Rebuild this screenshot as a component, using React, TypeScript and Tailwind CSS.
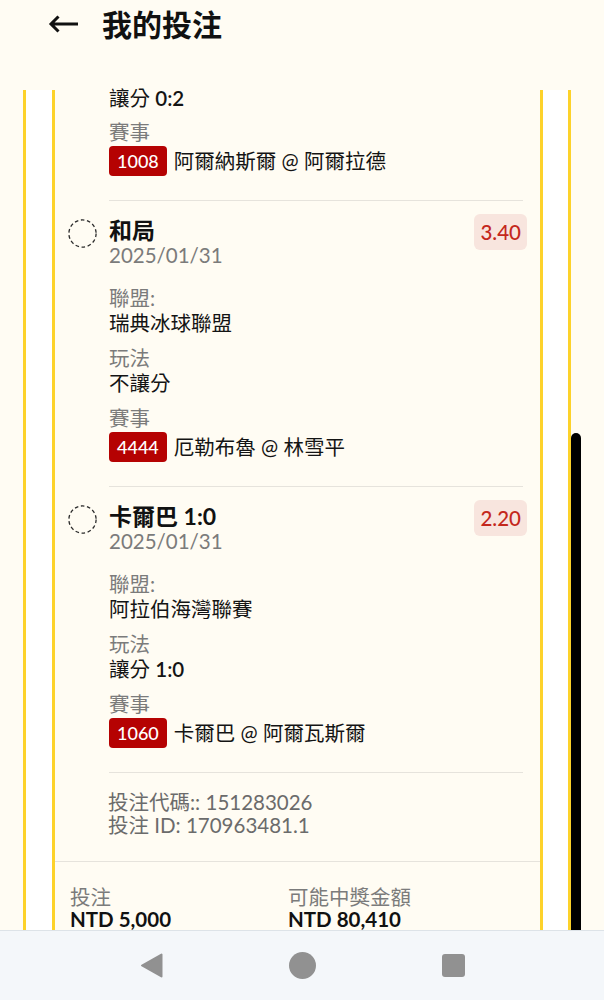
import React from "react";

const FONT = "font-['Lato','Noto_Sans_CJK_TC',sans-serif]";

function DashedCircle() {
  return (
    <svg width="29" height="29" viewBox="0 0 29 29" className="mt-[3px] shrink-0">
      <circle cx="14.5" cy="14.5" r="13.6" fill="none" stroke="#2a2a2a" strokeWidth="1.3" strokeDasharray="3.6 2.6" />
    </svg>
  );
}

function Label({ children }: { children: React.ReactNode }) {
  return <div className="text-[20.5px] leading-[25px] text-[#7b7b7b]">{children}</div>;
}

function Value({ children }: { children: React.ReactNode }) {
  return <div className="text-[20.5px] leading-[25px] text-[#141414]">{children}</div>;
}

function MatchRow({ code, teams }: { code: string; teams: string }) {
  return (
    <div className="mt-[1px] flex items-center gap-[7px]">
      <span className="flex h-[30px] items-center rounded-[4px] bg-[#b50202] px-[8px] text-[18px] font-medium text-white">{code}</span>
      <span className="text-[20.5px] leading-[30px] text-[#141414]">{teams}</span>
    </div>
  );
}

function Divider() {
  return <div className="ml-[54px] mr-[17px] h-px bg-[#e6e3dc]" />;
}

function Item({
  title,
  odds,
  league,
  play,
  code,
  teams,
}: {
  title: React.ReactNode;
  odds: string;
  league: string;
  play: React.ReactNode;
  code: string;
  teams: string;
}) {
  return (
    <div className="flex px-[13px] pb-[24px] pt-[15px]">
      <DashedCircle />
      <div className="ml-[12px] flex-1">
        <div className="flex items-start justify-between">
          <div>
            <div className="text-[23px] font-bold leading-[28px] text-[#111]">{title}</div>
            <div className="text-[20.5px] leading-[22px] text-[#7b7b7b]">2025/01/31</div>
          </div>
          <div className="-mt-[2px] flex h-[36px] items-center rounded-[6px] bg-[#f8e5de] px-[6px] text-[20.5px] font-medium text-[#c4281c]">
            {odds}
          </div>
        </div>
        <div className="mt-[20px] flex flex-col gap-[10px]">
          <div>
            <Label>聯盟:</Label>
            <Value>{league}</Value>
          </div>
          <div>
            <Label>玩法</Label>
            <Value>{play}</Value>
          </div>
          <div>
            <Label>賽事</Label>
            <MatchRow code={code} teams={teams} />
          </div>
        </div>
      </div>
    </div>
  );
}

export default function App() {
  return (
    <div className={`relative h-[1000px] w-[604px] overflow-hidden bg-[#fffcf3] ${FONT}`}>
      <header className="h-[90px]">
        <div className="flex h-[48px] items-center pl-[48px]">
          <svg width="31" height="18" viewBox="0 0 31 18" className="shrink-0">
            <path d="M30 9H3M10.5 1.5L3 9l7.5 7.5" fill="none" stroke="#111" strokeWidth="3" strokeLinecap="butt" strokeLinejoin="miter" />
          </svg>
          <h1 className="ml-[23px] text-[30px] font-bold leading-[40px] text-[#111]">我的投注</h1>
        </div>
      </header>

      <div className="h-[840px]">
        <div className="ml-[23px] w-[548px] border-x-[3px] border-[#fdd22a] bg-white pl-[26px] pr-[25px]">
          <div className="border-x-[3px] border-[#fdd22a] bg-[#fffcf3]">
            <div className="pb-[24px] pl-[54px]">
              <div className="text-[20.5px] leading-[16px] text-[#141414]">
                讓分 <span className="font-semibold">0:2</span>
              </div>
              <div className="mt-[14px]">
                <Label>賽事</Label>
                <MatchRow code="1008" teams="阿爾納斯爾 @ 阿爾拉德" />
              </div>
            </div>
            <Divider />
            <Item
              title="和局"
              odds="3.40"
              league="瑞典冰球聯盟"
              play="不讓分"
              code="4444"
              teams="厄勒布魯 @ 林雪平"
            />
            <Divider />
            <Item
              title="卡爾巴 1:0"
              odds="2.20"
              league="阿拉伯海灣聯賽"
              play={
                <>
                  讓分 <span className="font-semibold">1:0</span>
                </>
              }
              code="1060"
              teams="卡爾巴 @ 阿爾瓦斯爾"
            />
            <Divider />
            <div className="pb-[24px] pl-[53px] pt-[18px] text-[20.5px] leading-[23px] text-[#6b6b6b]">
              <div>投注代碼:: 151283026</div>
              <div>投注 ID: 170963481.1</div>
            </div>
            <div className="h-px bg-[#e6e3dc]" />
            <div className="flex pl-[15px] pt-[23px]">
              <div className="w-[218px]">
                <div className="text-[20.5px] leading-[24px] text-[#7b7b7b]">投注</div>
                <div className="text-[20.5px] font-bold leading-[20px] text-[#111]">NTD 5,000</div>
              </div>
              <div>
                <div className="text-[20.5px] leading-[24px] text-[#7b7b7b]">可能中獎金額</div>
                <div className="text-[20.5px] font-bold leading-[20px] text-[#111]">NTD 80,410</div>
              </div>
            </div>
            <div className="h-[60px]" />
          </div>
        </div>
      </div>

      <div className="absolute left-[571px] top-[433px] h-[497px] w-[10px] rounded-t-[5px] bg-black" />

      <nav className="relative z-10 flex h-[70px] items-center justify-center gap-[126px] border-t border-[#dde3e8] bg-[#f4f7fa]">
        <svg width="23" height="25" viewBox="0 0 23 25">
          <path d="M2 12.5L21.5 1.5V23.5Z" fill="#919191" stroke="#919191" strokeWidth="2" strokeLinejoin="round" />
        </svg>
        <div className="h-[27px] w-[27px] rounded-full bg-[#919191]" />
        <div className="h-[23px] w-[23px] rounded-[3px] bg-[#919191]" />
      </nav>
    </div>
  );
}
